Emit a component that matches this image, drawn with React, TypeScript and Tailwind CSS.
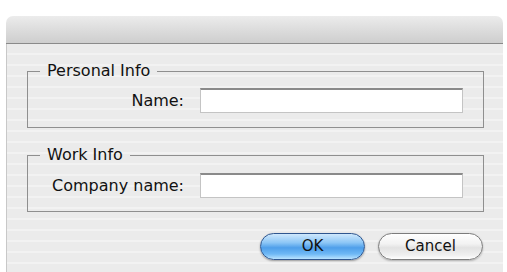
import React from "react";

function Field({ label }: { label: string }) {
  return (
    <div className="flex items-center">
      <label className="w-[135px] shrink-0 whitespace-nowrap text-right text-[16px] leading-[18px] text-[#111]">{label}</label>
      <input
        type="text"
        className="ml-[16px] h-[25px] w-[263px] bg-white border border-[#c4c4c4] border-t-[#8a8a8a] border-t-[2px] outline-none"
      />
    </div>
  );
}

function Group({ title, children, className }: { title: string; children: React.ReactNode; className?: string }) {
  return (
    <fieldset className={"mx-[20px] border border-[#8f8f8f] pl-[21px] pr-[20px] " + (className ?? "")}>
      <legend className="ml-[-9px] px-[7px] text-[16px] leading-[18px] text-[#111]">{title}</legend>
      {children}
    </fieldset>
  );
}

export default function App() {
  return (
    <div className="h-[272px] w-[507px] overflow-hidden bg-white pl-[6px] pr-[4px] pt-[16px] font-['DejaVu_Sans',sans-serif]">
      <div className="flex h-full flex-col">
        <div className="h-[27px] rounded-t-[7px] bg-[linear-gradient(180deg,#ececec_0%,#dedede_45%,#cecece_100%)]" />
        <div className="h-px bg-[#8a8a8a]" />
        <div className="flex-1 border-l border-[#c8c8c8] bg-[repeating-linear-gradient(180deg,#ebebeb_0px,#ebebeb_9px,#f2f2f2_9px,#f2f2f2_11px)] pt-[18px]">
          <Group title="Personal Info" className="pb-[14px]">
            <div className="mt-[8px]">
              <Field label="Name:" />
            </div>
          </Group>
          <Group title="Work Info" className="mt-[18px] pb-[13px]">
            <div className="mt-[9px]">
              <Field label="Company name:" />
            </div>
          </Group>
          <div className="mx-[20px] mt-[21px] flex justify-end gap-[13px]">
            <button className="h-[27px] w-[105px] rounded-full border border-[#2f568f] bg-[linear-gradient(180deg,#cfe8fc_0%,#8cc6f6_35%,#4f9fea_55%,#6fb8f5_80%,#b9e3ff_100%)] text-[15px] text-[#111] shadow-[0_1px_2px_rgba(0,0,0,0.35)]">
              OK
            </button>
            <button className="h-[27px] w-[105px] rounded-full border border-[#7c7c7c] bg-[linear-gradient(180deg,#ffffff_0%,#f2f2f2_40%,#e2e2e2_55%,#f0f0f0_85%,#ffffff_100%)] text-[15px] text-[#111] shadow-[0_1px_2px_rgba(0,0,0,0.25)]">
              Cancel
            </button>
          </div>
        </div>
      </div>
    </div>
  );
}
